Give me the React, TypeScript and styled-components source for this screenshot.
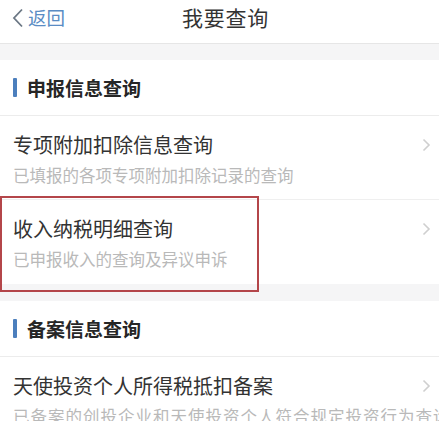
import React from "react";
import styled, { createGlobalStyle } from "styled-components";

const Global = createGlobalStyle`
  html, body { margin: 0; padding: 0; background: #ffffff; }
  body { font-family: "Noto Sans CJK SC", "Noto Sans", sans-serif; overflow: hidden; }
  * { box-sizing: border-box; }
`;

const Page = styled.div`
  width: 439px;
  min-height: 421px;
  background: #fff;
  display: flex;
  flex-direction: column;
  overflow: hidden;
`;

const NavBar = styled.div`
  height: 44px;
  border-bottom: 1px solid #e6e6e6;
  display: grid;
  grid-template-columns: 1fr auto 1fr;
  align-items: center;
  padding: 0 0 8px 12px;
`;

const Back = styled.div`
  display: flex;
  align-items: center;
  gap: 4px;
  color: #5a8cc4;
  font-size: 18.5px;
  line-height: 1;
`;

const NavTitle = styled.div`
  font-size: 21px;
  color: #333;
  letter-spacing: 0.8px;
  line-height: 1;
`;

const Gap = styled.div<{ $h: number }>`
  height: ${(p) => p.$h}px;
  background: #f5f5f6;
`;

const SectionHeader = styled.div`
  height: 56px;
  display: flex;
  align-items: center;
  gap: 10px;
  padding-left: 13px;
  border-bottom: 1px solid #ececec;
  font-weight: 700;
  font-size: 19px;
  color: #262626;
`;

const Bar = styled.span`
  width: 4px;
  height: 19px;
  border-radius: 1px;
  background: #4c7fbd;
`;

const Item = styled.div<{ $last?: boolean }>`
  position: relative;
  height: 84px;
  display: flex;
  align-items: center;
  padding: 0 8px 0 13px;
  border-bottom: ${(p) => (p.$last ? "none" : "1px solid #efefef")};
`;

const ItemText = styled.div`
  flex: 1;
  min-width: 0;
  display: flex;
  flex-direction: column;
  gap: 8px;
  padding-top: 4px;
`;

const ItemTitle = styled.div`
  font-size: 20px;
  line-height: 22px;
  color: #333;
  white-space: nowrap;
`;

const ItemSub = styled.div<{ $wide?: boolean }>`
  font-size: 16.5px;
  line-height: 22px;
  color: #b9b9b9;
  white-space: nowrap;
  letter-spacing: ${(p) => (p.$wide ? "1px" : "0")};
`;

const Chevron = styled.svg`
  width: 9px;
  height: 14px;
  flex: none;
  margin-bottom: 26px;
`;

const Highlight = styled.div`
  position: absolute;
  left: 0;
  top: -4px;
  width: 259px;
  height: 96px;
  border: 2px solid #b4464a;
  pointer-events: none;
`;

const Arrow = () => (
  <Chevron viewBox="0 0 9 14">
    <path d="M1.5 1.5 L7 7 L1.5 12.5" fill="none" stroke="#cfcfcf" strokeWidth="1.6" />
  </Chevron>
);

const items1 = [
  { t: "专项附加扣除信息查询", s: "已填报的各项专项附加扣除记录的查询" },
  { t: "收入纳税明细查询", s: "已申报收入的查询及异议申诉", hl: true },
];

export default function App() {
  return (
    <Page>
      <Global />
      <NavBar>
        <Back>
          <svg width="12" height="20" viewBox="0 0 12 20">
            <path d="M10 1.5 L2 10 L10 18.5" fill="none" stroke="#6b7784" strokeWidth="1.8" />
          </svg>
          返回
        </Back>
        <NavTitle>我要查询</NavTitle>
        <div />
      </NavBar>
      <Gap $h={16} />
      <SectionHeader>
        <Bar />
        申报信息查询
      </SectionHeader>
      {items1.map((it, i) => (
        <Item key={i} $last={i === items1.length - 1}>
          <ItemText>
            <ItemTitle>{it.t}</ItemTitle>
            <ItemSub>{it.s}</ItemSub>
          </ItemText>
          <Arrow />
          {it.hl && <Highlight />}
        </Item>
      ))}
      <Gap $h={17} />
      <SectionHeader>
        <Bar />
        备案信息查询
      </SectionHeader>
      <Item $last>
        <ItemText>
          <ItemTitle>天使投资个人所得税抵扣备案</ItemTitle>
          <ItemSub $wide>已备案的创投企业和天使投资个人符合规定投资行为查询</ItemSub>
        </ItemText>
        <Arrow />
      </Item>
    </Page>
  );
}
